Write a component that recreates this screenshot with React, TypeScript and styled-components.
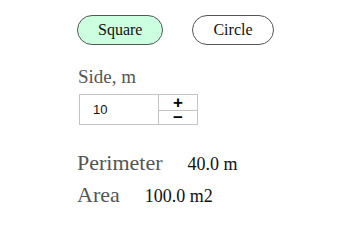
import { useState } from 'react'
import styled, { createGlobalStyle } from 'styled-components'

const GlobalStyle = createGlobalStyle`
  body {
    margin: 0;
    background: #fff;
    font-family: "Liberation Serif", "Times New Roman", serif;
  }
`

type Shape = 'square' | 'circle'

export default function App() {
  const [shape, setShape] = useState<Shape>('square')
  const [side, setSide] = useState(10)

  const perimeter = shape === 'square' ? side * 4 : Math.PI * side
  const area = shape === 'square' ? side * side : (Math.PI * side * side) / 4

  return (
    <Page>
      <GlobalStyle />
      <ShapeToggle>
        <ShapeButton $active={shape === 'square'} onClick={() => setShape('square')}>
          Square
        </ShapeButton>
        <ShapeButton $active={shape === 'circle'} onClick={() => setShape('circle')}>
          Circle
        </ShapeButton>
      </ShapeToggle>

      <FieldLabel>{shape === 'square' ? 'Side, m' : 'Diameter, m'}</FieldLabel>
      <Stepper>
        <NumberInput
          value={side}
          onChange={(e) => setSide(Number(e.target.value) || 0)}
        />
        <StepButtons>
          <StepButton onClick={() => setSide(side + 1)}>+</StepButton>
          <StepButton onClick={() => setSide(Math.max(0, side - 1))}>−</StepButton>
        </StepButtons>
      </Stepper>

      <Results>
        <ResultRow>
          <ResultName>Perimeter</ResultName>
          <ResultValue>{perimeter.toFixed(1)} m</ResultValue>
        </ResultRow>
        <ResultRow>
          <ResultName>Area</ResultName>
          <ResultValue>{area.toFixed(1)} m2</ResultValue>
        </ResultRow>
      </Results>
    </Page>
  )
}

const Page = styled.div`
  display: flex;
  flex-direction: column;
  align-items: flex-start;
  padding: 15px 0 0 77px;
`

const ShapeToggle = styled.div`
  display: flex;
  gap: 29px;
`

const ShapeButton = styled.button<{ $active: boolean }>`
  height: 30px;
  padding: 0 20px;
  border: 1px solid #555;
  border-radius: 15px;
  background: ${(p) => (p.$active ? '#ccffe0' : '#fff')};
  color: #111;
  font-family: "Liberation Serif", "Times New Roman", serif;
  font-size: 16px;
  cursor: pointer;
`

const FieldLabel = styled.div`
  margin: 21px 0 6px 1px;
  font-size: 19px;
  color: #555;
`

const Stepper = styled.div`
  display: flex;
  margin-left: 2px;
  border: 1px solid #c4c4c4;
`

const NumberInput = styled.input`
  width: 79px;
  height: 29px;
  box-sizing: border-box;
  padding: 0 0 0 13px;
  border: none;
  border-right: 1px solid #c4c4c4;
  outline: none;
  font-family: "Liberation Sans", Arial, sans-serif;
  font-size: 13px;
  color: #111;
`

const StepButtons = styled.div`
  display: flex;
  flex-direction: column;
  width: 38px;
`

const StepButton = styled.button`
  display: flex;
  align-items: center;
  justify-content: center;
  height: 15px;
  padding: 0;
  border: none;
  background: #fff;
  font-family: "Liberation Sans", Arial, sans-serif;
  font-size: 17px;
  font-weight: bold;
  line-height: 1;
  color: #000;
  cursor: pointer;

  & + & {
    height: 14px;
    border-top: 1px solid #c4c4c4;
  }
`

const Results = styled.div`
  display: flex;
  flex-direction: column;
  margin-top: 25px;
  gap: 6px;
`

const ResultRow = styled.div`
  display: flex;
  align-items: baseline;
  gap: 25px;
`

const ResultName = styled.span`
  font-size: 22px;
  color: #555;
`

const ResultValue = styled.span`
  font-size: 18px;
  color: #111;
`
